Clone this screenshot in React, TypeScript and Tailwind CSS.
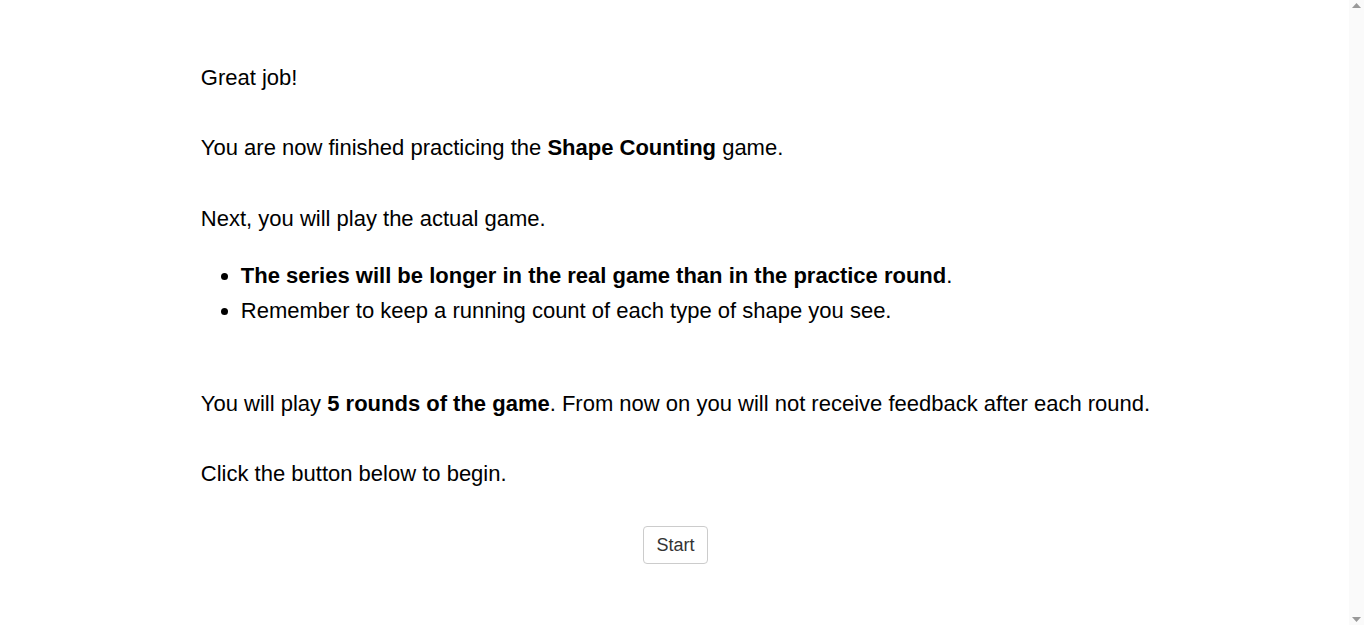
export default function App() {
  return (
    <div
      className="flex h-screen bg-white text-black"
      style={{ fontFamily: "'Liberation Sans', Arial, sans-serif" }}
    >
      <main className="flex-1 overflow-hidden">
        <div className="flex flex-col items-center pl-[2px] pt-[60px] text-[22px] leading-[1.6]">
          <div className="w-fit text-left">
            <div>Great job!</div>
            <br />
            <div>
              You are now finished practicing the <b>Shape Counting</b> game.
            </div>
            <br />
            <div>Next, you will play the actual game.</div>
            <ul className="my-[22px] list-disc pl-10">
              <li>
                <b>The series will be longer in the real game than in the practice round</b>.
              </li>
              <li>Remember to keep a running count of each type of shape you see.</li>
            </ul>
            <br />
            <div>
              You will play <b>5 rounds of the game</b>. From now on you will not receive feedback
              after each round.
            </div>
            <br />
            <div>Click the button below to begin.</div>
            <br />
          </div>
          <button className="h-[38px] w-[65px] rounded border border-[#ccc] bg-white text-[18px] leading-none text-[#333]">
            Start
          </button>
        </div>
      </main>

      {/* scrollbar track */}
      <div className="flex w-[15px] flex-col items-center justify-between bg-[#fafafa] py-[3px]">
        <svg width="9" height="5" viewBox="0 0 9 5">
          <path d="M4.5 0L9 5H0z" fill="#999" />
        </svg>
        <svg width="9" height="5" viewBox="0 0 9 5">
          <path d="M0 0h9L4.5 5z" fill="#999" />
        </svg>
      </div>
    </div>
  );
}
